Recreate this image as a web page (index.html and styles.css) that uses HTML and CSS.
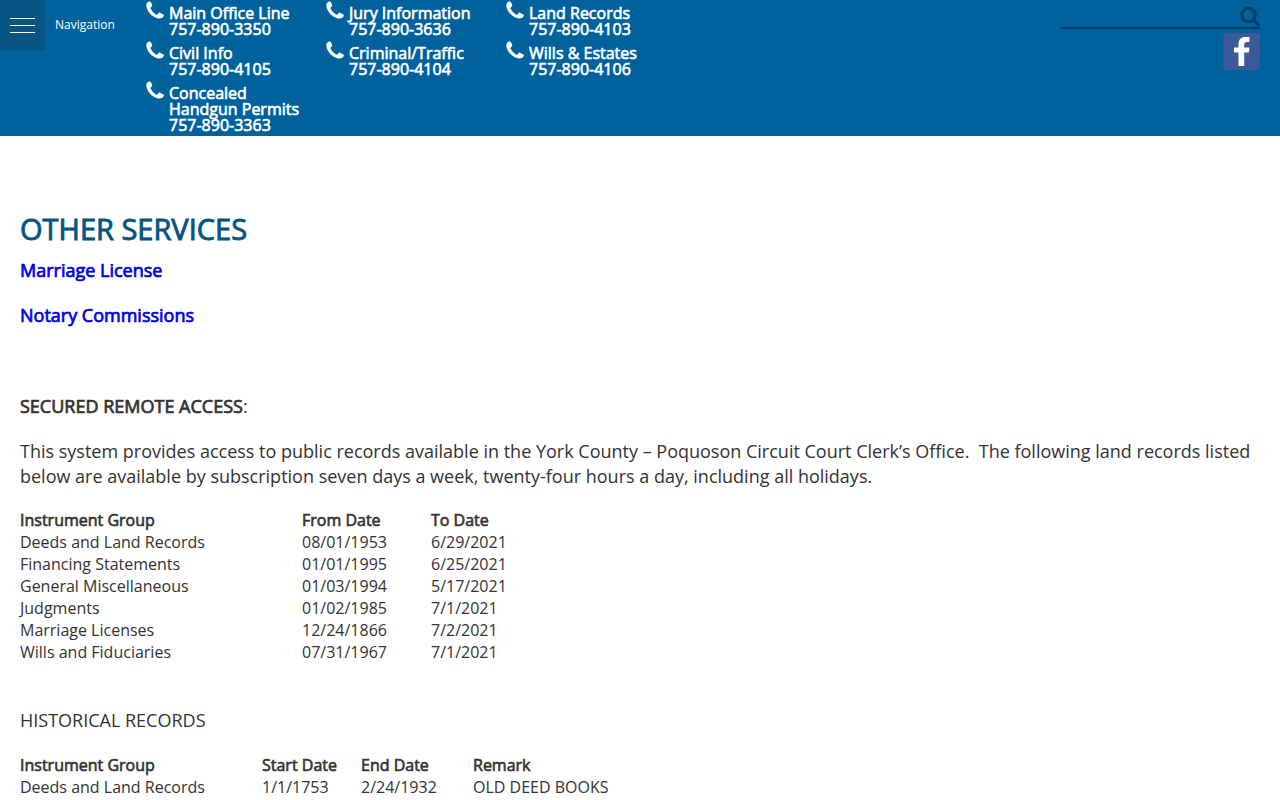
FILE: index.html
```html
<!DOCTYPE html>
<html lang="en">
<head>
<meta charset="utf-8">
<meta name="viewport" content="width=device-width, initial-scale=1">
<title>Other Services</title>
<link rel="stylesheet" href="styles.css">
</head>
<body>
<svg class="sprite" aria-hidden="true">
  <symbol id="phone" viewBox="0 0 18 18"><path d="M2.5.8C1 1.500.1 3 .3 5c.7 5.800 6.400 11.800 12.300 12.500 2 .2 4.300-.6 5-2.200.4-.8.4-1.500-.3-1.900l-3.200-1.700c-.6-.3-1.100-.1-1.500.4l-1.100 1.300c-.4.4-.8.4-1.300.1C7.700 12.200 5.700 9.900 4.600 7.500c-.2-.5-.1-.9.3-1.200l1-1c.4-.4.5-.8.3-1.300L5 1.200C4.600.3 3.500.3 2.500.8z"/></symbol>
</svg>
<header class="header">
  <div class="nav">
    <button class="nav-button" type="button" id="menu" aria-label="Menu"><span class="bar"></span><span class="bar"></span><span class="bar"></span></button>
    <label class="nav-label" for="menu">Navigation</label>
  </div>
  <ul class="contacts">
    <li class="contact"><svg class="phone"><use href="#phone"/></svg><span>Main Office Line<br>757-890-3350</span></li>
    <li class="contact"><svg class="phone"><use href="#phone"/></svg><span>Jury Information<br>757-890-3636</span></li>
    <li class="contact"><svg class="phone"><use href="#phone"/></svg><span>Land Records<br>757-890-4103</span></li>
    <li class="contact"><svg class="phone"><use href="#phone"/></svg><span>Civil Info<br>757-890-4105</span></li>
    <li class="contact"><svg class="phone"><use href="#phone"/></svg><span>Criminal/Traffic<br>757-890-4104</span></li>
    <li class="contact"><svg class="phone"><use href="#phone"/></svg><span>Wills &amp; Estates<br>757-890-4106</span></li>
    <li class="contact"><svg class="phone"><use href="#phone"/></svg><span>Concealed<br>Handgun Permits<br>757-890-3363</span></li>
  </ul>
  <div class="tools">
    <form class="search" role="search">
      <input class="search-input" type="search" aria-label="Search">
      <button class="search-button" type="button" aria-label="Search">
        <svg class="search-icon" viewBox="0 0 20 20"><circle cx="8.500" cy="8" r="6.800"/><path d="M13.500 13l4.800 4.800"/></svg>
      </button>
    </form>
    <a class="facebook" href="#" aria-label="Facebook">
      <svg class="facebook-icon" viewBox="0 0 37 37"><rect width="37" height="37" rx="4" fill="#3c5a99"/><path fill="#fff" d="M15.500 33V19.500H11V14.500h4.500V11c0-4.600 2.600-7 6.800-7H26.500v5h-2.700c-2 0-2.600.9-2.600 2.600v2.900h5.300l-.7 5h-4.600V33z"/></svg>
    </a>
  </div>
</header>
<main class="content">
  <h1 class="title">OTHER SERVICES</h1>
  <p class="link-line"><a class="link" href="#">Marriage License</a></p>
  <p class="link-line"><a class="link" href="#">Notary Commissions</a></p>
  <h2 class="section-title"><span class="strong">SECURED REMOTE ACCESS</span>:</h2>
  <p class="text">This system provides access to public records available in the York County – Poquoson Circuit Court Clerk’s Office.&nbsp; The following land records listed below are available by subscription seven days a week, twenty-four hours a day, including all holidays.</p>
  <table class="records remote">
    <colgroup><col class="group"><col class="from"><col></colgroup>
    <thead><tr><th>Instrument Group</th><th>From Date</th><th>To Date</th></tr></thead>
    <tbody>
      <tr><td>Deeds and Land Records</td><td>08/01/1953</td><td>6/29/2021</td></tr>
      <tr><td>Financing Statements</td><td>01/01/1995</td><td>6/25/2021</td></tr>
      <tr><td>General Miscellaneous</td><td>01/03/1994</td><td>5/17/2021</td></tr>
      <tr><td>Judgments</td><td>01/02/1985</td><td>7/1/2021</td></tr>
      <tr><td>Marriage Licenses</td><td>12/24/1866</td><td>7/2/2021</td></tr>
      <tr><td>Wills and Fiduciaries</td><td>07/31/1967</td><td>7/1/2021</td></tr>
    </tbody>
  </table>
  <h2 class="history-title">HISTORICAL RECORDS</h2>
  <table class="records history">
    <colgroup><col class="group"><col class="start"><col class="end"><col></colgroup>
    <thead><tr><th>Instrument Group</th><th>Start Date</th><th>End Date</th><th>Remark</th></tr></thead>
    <tbody><tr><td>Deeds and Land Records</td><td>1/1/1753</td><td>2/24/1932</td><td>OLD DEED BOOKS</td></tr></tbody>
  </table>
</main>
</body>
</html>
```
FILE: styles.css
```css
* { box-sizing: border-box; }
body {
  margin: 0;
  background: #fff;
  color: #333;
  font: 18px/25px "Open Sans", sans-serif;
}
.sprite { display: none; }

.header {
  display: flex;
  align-items: flex-start;
  background: #00629d;
  color: #fff;
  padding-right: 20px;
}
.nav { display: flex; align-items: center; width: 146px; flex: none; }
.nav-button {
  display: flex;
  flex-direction: column;
  justify-content: center;
  gap: 6px;
  width: 45px;
  height: 50px;
  padding: 0 10px;
  border: 0;
  background: #055482;
}
.bar { height: 1px; background: #fff; }
.nav-label { padding-left: 10px; font-size: 12px; line-height: 18px; }

.contacts {
  display: grid;
  grid-template-columns: repeat(3, 180px);
  row-gap: 8px;
  margin: 0;
  padding: 5px 0 3px;
  list-style: none;
  font-size: 16px;
  line-height: 16px;
}
.contact { display: flex; gap: 5px; -webkit-text-stroke: 0.04em currentColor; }
.phone { width: 18px; height: 18px; margin-top: -4px; fill: #fff; stroke: none; flex: none; }

.tools {
  display: flex;
  flex-direction: column;
  align-items: flex-end;
  gap: 4px;
  margin-left: auto;
}
.search { display: flex; width: 200px; height: 29px; border-bottom: 2px solid #033f6c; }
.search-input { flex: 1; min-width: 0; border: 0; padding: 0; background: none; color: #fff; font: inherit; outline: 0; appearance: none; }
.search-button { display: flex; align-items: flex-start; width: 20px; padding: 7px 0 0; border: 0; background: none; }
.search-icon { display: block; width: 20px; height: 20px; fill: none; stroke: #033f6c; stroke-width: 3; stroke-linecap: round; }
.facebook, .facebook-icon { display: block; width: 37px; height: 37px; }

.content { padding: 72px 20px 0; }
.title {
  margin: 0 0 8px;
  color: #055482;
  font-size: 29px;
  font-weight: 400;
  line-height: 42px;
  -webkit-text-stroke: 0.03em currentColor;
}
.link-line { margin: 0 0 20px; }
.link { color: #00e; text-decoration: none; -webkit-text-stroke: 0.04em currentColor; }
.section-title { margin: 66px 0 20px; font-size: 18px; font-weight: 400; line-height: 25px; }
.strong { -webkit-text-stroke: 0.04em currentColor; }
.text { margin: 0 0 20px; }

.records { border-collapse: collapse; table-layout: fixed; font-size: 16px; line-height: 22px; }
.records th, .records td { padding: 0; text-align: left; font-weight: 400; white-space: nowrap; }
.records th { -webkit-text-stroke: 0.04em currentColor; }
.remote { width: 520px; }
.remote .group { width: 282px; }
.remote .from { width: 129px; }
.history { width: 600px; }
.history .group { width: 242px; }
.history .start { width: 99px; }
.history .end { width: 112px; }
.history-title { margin: 45px 0 21px; font-size: 18px; font-weight: 400; line-height: 25px; }
```
